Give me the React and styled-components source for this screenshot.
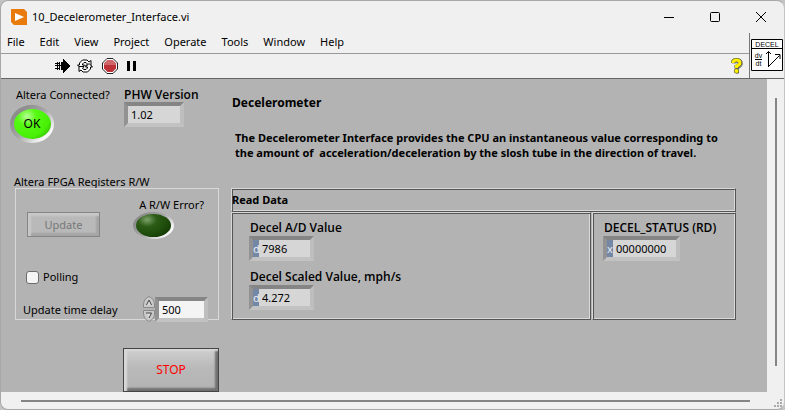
import React from "react";
import styled, { createGlobalStyle } from "styled-components";

const GlobalStyle = createGlobalStyle`
  * { box-sizing: border-box; }
  body { margin: 0; background: #c4c4c4; }
  body, button, input { font: 11px/16px "Noto Sans", "Open Sans", sans-serif; color: #000; }
`;

const Window = styled.div`
  display: flex;
  flex-direction: column;
  min-height: 100vh;
  background: #f0f0f0;
  border: 1px solid #a8a8a8;
  border-right-color: #c4c4c4;
  border-radius: 8px;
  overflow: hidden;
`;

const TitleBar = styled.header`
  display: flex;
  align-items: center;
  height: 32px;
  padding-left: 10px;
`;

const Title = styled.h1`
  flex: 1;
  margin: 0 0 0 5px;
  font-size: 11px;
  font-weight: 400;
`;

const CaptionButton = styled.button`
  display: grid;
  place-items: center;
  width: 46px;
  height: 30px;
  padding: 0;
  border: 0;
  background: none;
`;

const Bars = styled.div`
  display: flex;
  height: 46px;
  border-bottom: 1px solid #666;
`;

const BarStack = styled.div`
  flex: 1;
  border-right: 1px solid #777;
`;

const Menu = styled.nav`
  display: flex;
  align-items: center;
  gap: 15px;
  height: 21px;
  padding: 0 0 2px 6px;
  border-bottom: 1px solid #999;
`;

const MenuItem = styled.button`
  padding: 0;
  border: 0;
  background: none;
`;

const Toolbar = styled.div`
  display: flex;
  align-items: center;
  gap: 6px;
  height: 24px;
  padding: 0 6px 0 54px;
`;

const ToolButton = styled.button`
  display: flex;
  padding: 0;
  border: 0;
  background: none;
  margin-left: ${(p) => (p.$push ? "auto" : p.$gap ? "3px" : "0")};
`;

const ViIcon = styled.div`
  padding: 6px 1px 0 1px;
  svg { display: block; }
`;

const Viewport = styled.div`
  flex: 1;
  display: grid;
  grid-template-columns: minmax(0, 1fr) 17px;
  grid-template-rows: 1fr 17px;
`;

const Panel = styled.main`
  display: flex;
  gap: 12px;
  padding: 8px 31px 0 9px;
  background: #b3b3b3;
`;

const ScrollBar = styled.div`
  display: flex;
  justify-content: center;
  padding: ${(p) => (p.$vertical ? "19px 0 26px" : "8px 17px 6px 20px")};
  &::before {
    content: "";
    width: ${(p) => (p.$vertical ? "2px" : "100%")};
    height: ${(p) => (p.$vertical ? "100%" : "2px")};
    background: #858585;
  }
`;

const Grip = styled.svg`
  align-self: end;
  justify-self: end;
  margin: 0 2px 2px 0;
`;

const Controls = styled.section`
  display: flex;
  flex-direction: column;
  width: 209px;
  flex: none;
`;

const StatusRow = styled.div`
  display: grid;
  grid-template-columns: 114px auto;
  height: 88px;
`;

const Field = styled.div`
  display: flex;
  flex-direction: column;
  align-items: flex-start;
`;

const Label = styled.label`
  font-family: ${(p) => (p.$bold ? '"Open Sans", sans-serif' : "inherit")};
  font-size: ${(p) => (p.$bold ? "12px" : "11px")};
  font-weight: ${(p) => (p.$bold ? 600 : 400)};
  line-height: 15px;
  white-space: nowrap;
`;

const LedLabel = styled(Label)`
  padding-left: 6px;
`;

const Led = styled.output`
  display: grid;
  place-items: center;
  width: ${(p) => (p.$large ? "44px" : "41px")};
  height: ${(p) => (p.$large ? "38px" : "27px")};
  margin-top: ${(p) => (p.$large ? "3px" : "0")};
  border-radius: 50%;
  background: linear-gradient(135deg, #8d8d8d 20%, #a8a8a8 50%, #f8f8f8 82%);
  font-size: 12px;
`;

const Bulb = styled.span`
  display: grid;
  place-items: center;
  width: ${(p) => (p.$on ? "37px" : "35px")};
  height: ${(p) => (p.$on ? "30px" : "23px")};
  border-radius: 50%;
  background: ${(p) =>
    p.$on
      ? "radial-gradient(ellipse at 35% 25%, #b8ff98 0, #56fa12 28%, #48f006 65%, #279300 100%)"
      : "radial-gradient(ellipse at 32% 25%, #7ea36b 0, #2c5c16 28%, #1e4b0a 60%, #0c2c00 100%)"};
`;

const Inset = styled.div`
  display: flex;
  width: ${(p) => p.$width}px;
  height: 25px;
  border: 4px solid;
  border-color: #858585 #bebebe #c2c2c2 #929292;
  background: ${(p) => (p.$editable ? "#f4f4f4" : "#d6d6d6")};
`;

const Radix = styled.span`
  width: 6px;
  background: #7488a6;
  color: #e8edf5;
  line-height: 17px;
  text-align: center;
`;

const ValueBox = styled.input`
  flex: 1;
  min-width: 0;
  padding: 0 0 0 3px;
  border: 0;
  outline: 0;
  background: none;
  line-height: 17px;
`;

const GroupTitle = styled.h2`
  margin: 0 0 0 4px;
  font-size: 11px;
  font-weight: 400;
  line-height: 13px;
`;

const Group = styled.div`
  display: flex;
  flex-direction: column;
  height: 132px;
  margin-left: 5px;
  padding: 8px 10px 0 7px;
  border: 1px solid #d9d9d9;
`;

const UpdateRow = styled.div`
  display: flex;
  justify-content: space-between;
  align-items: flex-end;
  padding: 0 4px;
`;

const UpdateButton = styled.button`
  width: 73px;
  height: 25px;
  margin-bottom: 2px;
  padding: 0;
  border: 1px solid #858585;
  background: #b9b9b9;
  box-shadow: inset 3px 3px 2px #c8c8c8, inset -3px -3px 2px #a5a5a5;
  color: #777;
`;

const Polling = styled.label`
  display: flex;
  align-items: center;
  gap: 4px;
  margin: 28px 0 9px 3px;
  line-height: 20px;
`;

const Check = styled.input`
  appearance: none;
  width: 13px;
  height: 13px;
  margin: 0;
  border: 1px solid #6c6c6c;
  border-radius: 3px;
  background: #f4f4f4;
`;

const DelayRow = styled.div`
  display: flex;
  align-items: center;
`;

const DelayLabel = styled(Label)`
  flex: 1;
`;

const Spinner = styled.div`
  display: flex;
  flex-direction: column;
  button { display: flex; padding: 0; border: 0; background: none; }
`;

const StopButton = styled.button`
  align-self: flex-end;
  width: 96px;
  height: 44px;
  margin-top: 28px;
  border: 1px solid #444;
  background: linear-gradient(#cfcfcf, #b9b9b9 45%, #b3b3b3);
  box-shadow: inset 3px 2px 2px #d8d8d8, inset -3px -3px 2px #707070;
  color: #f00;
  font-size: 12px;
`;

const Details = styled.section`
  flex: 1;
  min-width: 0;
  padding-top: 8px;
`;

const Heading = styled.h2`
  margin: 0 0 19px 1px;
  font-size: 12px;
  line-height: 16px;
`;

const Description = styled.p`
  margin: 0 0 28px 4px;
  font-weight: 700;
  line-height: 15px;
  white-space: pre;
`;

const Frame = styled.div`
  border: 1px solid;
  border-color: #d8d8d8 #555 #555 #d8d8d8;
  box-shadow: inset 1px 1px #555, inset -1px -1px #d8d8d8;
`;

const FrameTitle = styled(Frame)`
  height: 24px;
  padding: 3px 0 0;
  font-weight: 700;
`;

const Frames = styled.div`
  display: grid;
  grid-template-columns: 5fr 2fr;
  gap: 1px;
`;

const Readings = styled(Frame)`
  display: flex;
  flex-direction: column;
  gap: 8px;
  height: 108px;
  padding: 7px 0 0 ${(p) => (p.$narrow ? "10px" : "17px")};
`;

const ReadingLabel = styled(Label)`
  margin: 0 0 1px 1px;
`;

const ICON = { shapeRendering: "crispEdges" };

function Reading({ id, label, radix, value, width }) {
  return (
    <Field>
      <ReadingLabel $bold htmlFor={id}>{label}</ReadingLabel>
      <Inset $width={width}>
        <Radix>{radix}</Radix>
        <ValueBox id={id} defaultValue={value} readOnly />
      </Inset>
    </Field>
  );
}

function Arrow({ down }) {
  return (
    <svg width="12" height="13" viewBox="0 0 12 13">
      <path
        d={down ? "M.5 1.500h11V4q0 6-5.500 8.500Q.500 10 .500 4Z" : "M.5 11.500h11V9q0-6-5.500-8.500Q.500 3 .500 9Z"}
        fill="#c9c9c9"
        stroke="#8a8a8a"
      />
      <path d={down ? "M3.500 4h5L6 9Z" : "M3.500 9h5L6 4Z"} fill="#ddd" />
      <path d={down ? "M3 4h5.500L6 9" : "M3.500 9L6 4l2.500 5"} fill="none" stroke="#444" />
    </svg>
  );
}

export default function App() {
  return (
    <>
      <GlobalStyle />
      <Window>
        <TitleBar>
          <svg width="16" height="16" viewBox="0 0 16 16">
            <path d="M0 0h13l3 3v13H3l-3-3Z" fill="#e97b0c" />
            <path d="M4 4l9 4-9 4Z" fill="#fff" />
          </svg>
          <Title>10_Decelerometer_Interface.vi</Title>
          <CaptionButton aria-label="Minimize">
            <svg width="10" height="10" {...ICON}><path d="M0 5h10v1H0z" /></svg>
          </CaptionButton>
          <CaptionButton aria-label="Maximize">
            <svg width="10" height="10"><rect x=".5" y=".5" width="9" height="9" rx="1" fill="none" stroke="#000" /></svg>
          </CaptionButton>
          <CaptionButton aria-label="Close">
            <svg width="10" height="10"><path d="M0 0l10 10M10 0L0 10" stroke="#000" /></svg>
          </CaptionButton>
        </TitleBar>
        <Bars>
          <BarStack>
            <Menu>
              {["File", "Edit", "View", "Project", "Operate", "Tools", "Window", "Help"].map((m) => (
                <MenuItem key={m}>{m}</MenuItem>
              ))}
            </Menu>
            <Toolbar>
              <ToolButton aria-label="Run">
                <svg width="16" height="14" viewBox="0 0 16 14" {...ICON}>
                  <path d="M8 0h1v1h1v1h1v1h1v1h1v1h1v1h1v2h-1v1h-1v1h-1v1h-1v1h-1v1H9v1H8v-3H6V3h2ZM4 3h1v8H4ZM2 3h1v8H2Z" />
                  <path d="M0 4h4v1H0ZM0 6h6v1H0ZM0 9h4v1H0Z" />
                </svg>
              </ToolButton>
              <ToolButton aria-label="Run continuously">
                <svg width="16" height="14" viewBox="0 0 16 14" fill="#fff" stroke="#000">
                  <path d="M2.500 6V4L5.500 1H10l2 2 2-1.500V7H8.500l2-2L9 3.500H7L5.500 5v1h2L4 9.500.500 6Z" />
                  <path d="M13.500 8v2l-3 3H6l-2-2-2 1.500V7.500h5l-1.500 2L7 10.500h2L10.500 9V8h-2L12 4.500 15.500 8Z" />
                </svg>
              </ToolButton>
              <ToolButton aria-label="Abort" $gap>
                <svg width="16" height="16" viewBox="0 0 16 16">
                  <path d="M5 .5h6L15.500 5v6L11 15.500H5L.500 11V5Z" fill="#fff" stroke="#222" />
                  <path d="M5.500 2h5L14 5.500v5L10.500 14h-5L2 10.500v-5Z" fill="#bd3238" />
                  <path d="M5.500 2h5L14 5.500V7H2V5.500Z" fill="#cf6669" />
                </svg>
              </ToolButton>
              <ToolButton aria-label="Pause" $gap>
                <svg width="9" height="10" {...ICON}><path d="M0 0h3v10H0zM6 0h3v10H6z" /></svg>
              </ToolButton>
              <ToolButton aria-label="Help" $push>
                <svg width="12" height="16" viewBox="0 0 12 16">
                  <path d="M3 5.500Q3 3 6.500 3t3.500 2.500Q10 7.500 6.500 9V11M5 13.500h3" fill="none" stroke="#888" strokeWidth="4" />
                  <path d="M2 5Q2 2 5.500 2T9 5Q9 7 5.500 8.500V10.500" fill="none" stroke="#443" strokeWidth="4" />
                  <circle cx="5.500" cy="13" r="2.500" fill="#443" />
                  <path d="M2 5Q2 2 5.500 2T9 5Q9 7 5.500 8V10" fill="none" stroke="#fff000" strokeWidth="3" />
                  <circle cx="5.500" cy="13" r="2" fill="#fff000" />
                </svg>
              </ToolButton>
            </Toolbar>
          </BarStack>
          <ViIcon>
            <svg width="32" height="32" viewBox="0 0 32 32" fontFamily="Liberation Sans, sans-serif" fontWeight="700">
              <path d="M.5.500h31v31H.500ZM.500 9.500h31" fill="#fff" stroke="#000" />
              <text x="16" y="7.500" fontSize="7" fontWeight="400" textAnchor="middle">DECEL</text>
              <text x="7.500" y="19" fontSize="7" fontWeight="400" textAnchor="middle">dv</text>
              <path d="M4 20.500h7" stroke="#000" />
              <text x="7.500" y="27" fontSize="7" fontWeight="400" textAnchor="middle">dt</text>
              <path d="M17.500 28V12.500M15 15l2.500-2.500L20 15M17.500 27.500l11-11M24 15.500h5V20" fill="none" stroke="#000" />
            </svg>
          </ViIcon>
        </Bars>
        <Viewport>
          <Panel>
            <Controls>
              <StatusRow>
                <Field>
                  <LedLabel htmlFor="connected">Altera Connected?</LedLabel>
                  <Led id="connected" $large><Bulb $on>OK</Bulb></Led>
                </Field>
                <Field>
                  <Label $bold htmlFor="version">PHW Version</Label>
                  <Inset $width={60}><ValueBox id="version" defaultValue="1.02" readOnly /></Inset>
                </Field>
              </StatusRow>
              <GroupTitle>Altera FPGA Registers R/W</GroupTitle>
              <Group>
                <UpdateRow>
                  <UpdateButton disabled>Update</UpdateButton>
                  <Field>
                    <LedLabel htmlFor="rwerror">A R/W Error?</LedLabel>
                    <Led id="rwerror"><Bulb /></Led>
                  </Field>
                </UpdateRow>
                <Polling><Check type="checkbox" />Polling</Polling>
                <DelayRow>
                  <DelayLabel htmlFor="delay">Update time delay</DelayLabel>
                  <Spinner>
                    <button aria-label="Increase"><Arrow /></button>
                    <button aria-label="Decrease"><Arrow down /></button>
                  </Spinner>
                  <Inset $width={53} $editable><ValueBox id="delay" defaultValue="500" /></Inset>
                </DelayRow>
              </Group>
              <StopButton>STOP</StopButton>
            </Controls>
            <Details>
              <Heading>Decelerometer</Heading>
              <Description>
                {"The Decelerometer Interface provides the CPU an instantaneous value corresponding to\nthe amount of  acceleration/deceleration by the slosh tube in the direction of travel."}
              </Description>
              <FrameTitle>Read Data</FrameTitle>
              <Frames>
                <Readings>
                  <Reading id="ad" label="Decel A/D Value" radix="d" value="7986" width={65} />
                  <Reading id="scaled" label="Decel Scaled Value, mph/s" radix="d" value="4.272" width={65} />
                </Readings>
                <Readings $narrow>
                  <Reading id="status" label="DECEL_STATUS (RD)" radix="x" value="00000000" width={77} />
                </Readings>
              </Frames>
            </Details>
          </Panel>
          <ScrollBar $vertical />
          <ScrollBar />
          <Grip width="8" height="8" fill="#aaa" {...ICON}>
            <path d="M6 0h2v2H6zM3 3h2v2H3zM6 3h2v2H6zM0 6h2v2H0zM3 6h2v2H3zM6 6h2v2H6z" />
          </Grip>
        </Viewport>
      </Window>
    </>
  );
}
